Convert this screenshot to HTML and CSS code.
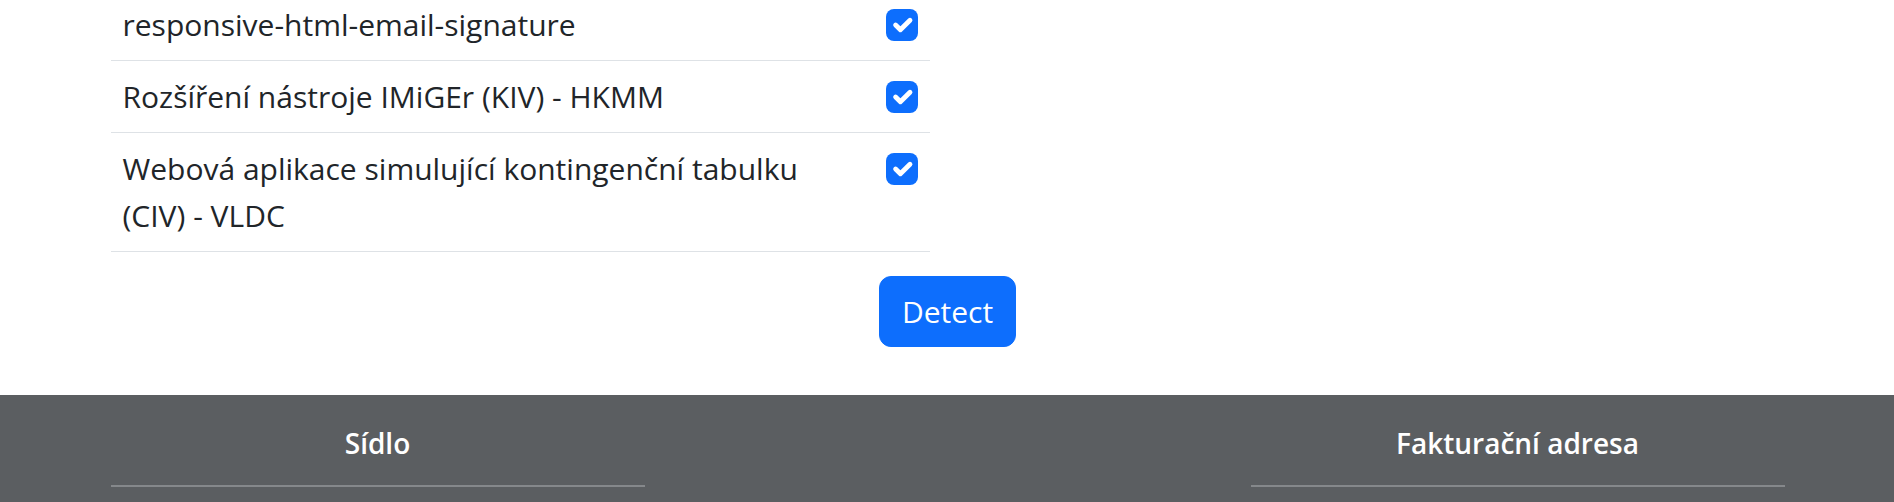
FILE: index.html
```html
<!DOCTYPE html>
<html lang="cs">
<head>
<meta charset="utf-8">
<title>Detect</title>
<link rel="stylesheet" href="styles.css">
</head>
<body>
<main class="container">
  <div class="list">
    <div class="row">
      <div class="name">responsive-html-email-signature</div>
      <div class="check"><span class="box"><svg viewBox="0 0 20 20"><path d="m6 10 3 3 6-6"/></svg></span></div>
    </div>
    <div class="row">
      <div class="name">Rozšíření nástroje IMiGEr (KIV) - HKMM</div>
      <div class="check"><span class="box"><svg viewBox="0 0 20 20"><path d="m6 10 3 3 6-6"/></svg></span></div>
    </div>
    <div class="row">
      <div class="name">Webová aplikace simulující kontingenční tabulku (CIV) - VLDC</div>
      <div class="check"><span class="box"><svg viewBox="0 0 20 20"><path d="m6 10 3 3 6-6"/></svg></span></div>
    </div>
  </div>
  <div class="actions">
    <button class="btn" type="button">Detect</button>
  </div>
</main>
<footer class="footer">
  <div class="footer-inner">
    <section class="fcol">
      <h5>Sídlo</h5>
      <hr>
    </section>
    <section class="fcol empty"></section>
    <section class="fcol">
      <h5>Fakturační adresa</h5>
      <hr>
    </section>
  </div>
</footer>
</body>
</html>
```
FILE: styles.css
```css
html, body {
  margin: 0;
  padding: 0;
  background: #fff;
}
body {
  font-family: "Open Sans", "Noto Sans", sans-serif;
  font-size: 30px;
  color: #212529;
  overflow: hidden;
}
.container {
  width: 1674px;
  margin: 0 auto;
  padding-left: 1px;
}
.list {
  width: 819px;
  margin-top: -11px;
}
.row {
  display: flex;
  border-bottom: 1px solid #dee2e6;
}
.name {
  flex: 1;
  padding: 12px;
  line-height: 47px;
}
.check {
  width: 32px;
  padding: 12px;
}
.box {
  display: flex;
  align-items: center;
  justify-content: center;
  width: 32px;
  height: 32px;
  margin-top: 8px;
  background: #0d6efd;
  border-radius: 8px;
}
.box svg {
  width: 32px;
  height: 32px;
  fill: none;
  stroke: #fff;
  stroke-width: 3;
  stroke-linecap: round;
  stroke-linejoin: round;
}
.actions {
  display: flex;
  justify-content: center;
  padding: 24px 0 48px;
}
.btn {
  font-family: inherit;
  font-size: 30px;
  line-height: 45px;
  padding: 12px 22px;
  border: 1px solid #0d6efd;
  background: #0d6efd;
  color: #fff;
  border-radius: 12px;
}
.footer {
  background: #5b5e61;
  color: #fff;
  padding-top: 24px;
  height: 200px;
}
.footer-inner {
  width: 1674px;
  margin: 0 auto;
  padding-left: 1px;
  display: grid;
  grid-template-columns: repeat(3, 1fr);
  column-gap: 36px;
}
.fcol h5 {
  margin: 6px 0 0;
  font-size: 28px;
  font-weight: 600;
  line-height: 36px;
  text-align: center;
}
.fcol hr {
  margin: 24px 0 0;
  border: 0;
  border-top: 2px solid #85888b;
}
```
